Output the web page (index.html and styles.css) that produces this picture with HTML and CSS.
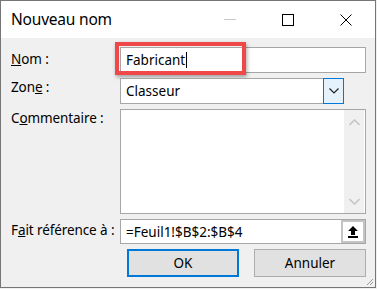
FILE: index.html
```html
<!DOCTYPE html>
<html lang="fr">
<head>
<meta charset="UTF-8">
<meta name="viewport" content="width=device-width, initial-scale=1.0">
<title>Nouveau nom</title>
<link rel="stylesheet" href="styles.css">
</head>
<body>

<div class="window">
  <div class="titlebar">
    <span class="title">Nouveau nom</span>
    <div class="caption">
      <span class="cap-btn">
        <svg width="12" height="12" viewBox="0 0 12 12"><line x1="0" y1="5.5" x2="12" y2="5.5" stroke="#c8c8c8" stroke-width="1"/></svg>
      </span>
      <span class="cap-btn">
        <svg width="12" height="12" viewBox="0 0 12 12"><rect x="0.5" y="0.5" width="11" height="11" fill="none" stroke="#000" stroke-width="1"/></svg>
      </span>
      <span class="cap-btn">
        <svg width="12" height="12" viewBox="0 0 12 12"><path d="M0.5 0.5 L11.5 11.5 M11.5 0.5 L0.5 11.5" stroke="#000" stroke-width="1"/></svg>
      </span>
    </div>
  </div>

  <div class="content">
    <div class="form">
      <div class="label label-nom"><u>N</u>om :</div>
      <div class="field name-field">
        <span class="value">Fabricant</span><span class="caret"></span>
        <!-- cadre rouge d'annotation -->
        <span class="highlight"></span>
      </div>

      <div class="label label-zone">Zon<u>e</u> :</div>
      <div class="combo">
        <span class="value">Classeur</span>
        <span class="drop">
          <svg width="10" height="6" viewBox="0 0 10 6"><path d="M0.5 0.5 L5 5 L9.5 0.5" fill="none" stroke="#222" stroke-width="1.2"/></svg>
        </span>
      </div>

      <div class="label label-comment">C<u>o</u>mmentaire :</div>
      <div class="memo">
        <div class="scroll">
          <svg width="11" height="7" viewBox="0 0 11 7"><path d="M0.5 6 L5.5 1 L10.5 6" fill="none" stroke="#c6c6c6" stroke-width="1.6"/></svg>
          <svg width="11" height="7" viewBox="0 0 11 7"><path d="M0.5 1 L5.5 6 L10.5 1" fill="none" stroke="#c6c6c6" stroke-width="1.6"/></svg>
        </div>
      </div>

      <div class="label label-ref">F<u>a</u>it référence à :</div>
      <div class="field ref-field">
        <span class="value">=Feuil1!$B$2:$B$4</span>
        <span class="collapse">
          <svg width="12" height="13" viewBox="0 0 12 13"><path d="M6 1 L11 6 L8 6 L8 10 L4 10 L4 6 L1 6 Z" fill="#000"/><rect x="1" y="11" width="10" height="2" fill="#000"/></svg>
        </span>
      </div>
    </div>

    <div class="actions">
      <div class="btn primary">OK</div>
      <div class="btn">Annuler</div>
    </div>
  </div>

  <span class="grip">
    <svg width="8" height="8" viewBox="0 0 8 8"><path d="M7 1 L1 7 M7 4 L4 7" stroke="#9a9a9a" stroke-width="1"/></svg>
  </span>
</div>

</body>
</html>
```

FILE: styles.css
```css
body {
  margin: 0;
  padding: 0;
  background-color: #f0f0f0;
  font-family: "Noto Sans", "Open Sans", sans-serif;
  color: #000;
}

.window {
  width: 374px;
  height: 286px;
  border: 1px solid #767676;
  background-color: #f0f0f0;
  position: relative;
}

/* barre de titre */
.titlebar {
  height: 37px;
  background-color: #fff;
  display: flex;
  align-items: center;
  justify-content: space-between;
}

.title {
  padding-left: 10px;
  font-size: 15.5px;
  letter-spacing: -0.2px;
  margin-top: -1px;
}

.caption {
  display: flex;
  height: 100%;
}

.cap-btn {
  width: 58px;
  display: flex;
  align-items: center;
  justify-content: center;
}

.cap-btn svg {
  display: block;
}

/* zone du formulaire */
.content {
  padding: 9px 9px 0 10px;
  font-size: 13.5px;
}

.form {
  display: grid;
  grid-template-columns: 109px 246px;
  grid-template-rows: 26px 26px 105px 25px;
  row-gap: 5px;
}

.label {
  letter-spacing: -0.1px;
  white-space: nowrap;
}

.label-nom { padding-top: 3px; }
.label-zone { padding-top: 0; }
.label-comment { padding-top: 0; }
.label-ref { padding-top: 2px; }

.field,
.combo,
.memo {
  background-color: #fff;
  border: 1px solid #a6a6a6;
  box-sizing: border-box;
  position: relative;
  display: flex;
  align-items: center;
}

.value {
  padding-left: 5px;
  white-space: nowrap;
}

.caret {
  display: inline-block;
  width: 1px;
  height: 16px;
  background-color: #000;
  margin-left: 1px;
}

.highlight {
  position: absolute;
  left: -6px;
  top: -6px;
  width: 123px;
  height: 25px;
  border: 4px solid #ee4848;
  box-shadow: 1px 2px 4px rgba(0, 0, 0, 0.35);
}

.combo {
  justify-content: space-between;
  width: 224px;
}

.drop {
  width: 19px;
  height: 24px;
  margin-right: -1px;
  border: 1px solid #0078d7;
  background-color: #e5f1fb;
  display: flex;
  align-items: center;
  justify-content: center;
}

.memo {
  justify-content: flex-end;
  align-items: stretch;
}

.scroll {
  width: 20px;
  margin: 0 1px 0 0;
  background-color: #f0f0f0;
  display: flex;
  flex-direction: column;
  justify-content: space-between;
  align-items: center;
  padding: 9px 0 8px;
}

.scroll svg {
  display: block;
}

.ref-field {
  justify-content: space-between;
}

.collapse {
  width: 20px;
  height: 19px;
  border: 2px solid #c4c4c4;
  background-color: #fff;
  margin-right: 0;
  display: flex;
  align-items: center;
  justify-content: center;
}

/* boutons */
.actions {
  display: flex;
  justify-content: flex-end;
  gap: 15px;
  margin-top: 5px;
}

.btn {
  width: 110px;
  height: 26px;
  border: 1px solid #adadad;
  background-color: #e1e1e1;
  display: flex;
  align-items: center;
  justify-content: center;
}

.btn.primary {
  width: 108px;
  height: 24px;
  border: 2px solid #0078d7;
}

.grip {
  position: absolute;
  right: 1px;
  bottom: 1px;
  display: block;
  line-height: 0;
}
```
